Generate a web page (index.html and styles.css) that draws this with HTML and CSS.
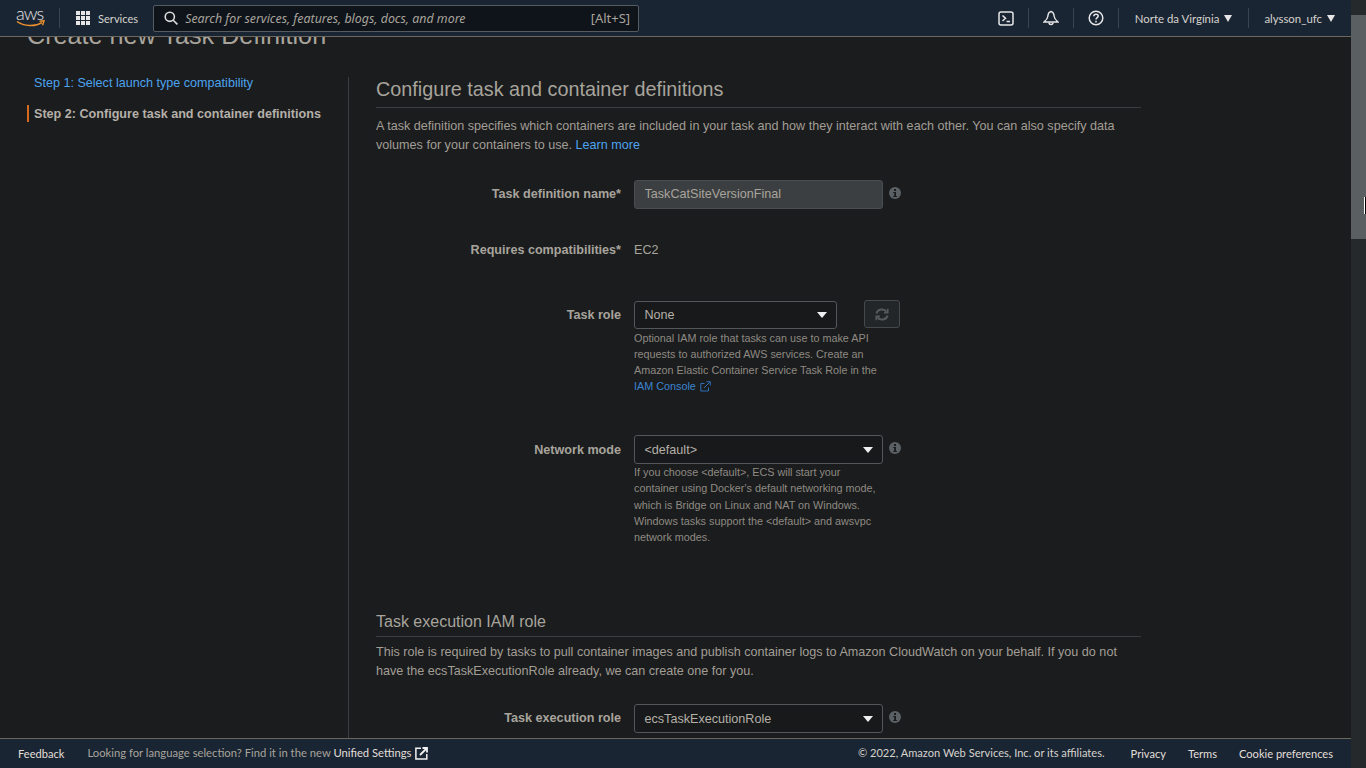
FILE: index.html
```html
<!DOCTYPE html>
<html lang="en">
<head>
    <meta charset="UTF-8">
    <meta name="viewport" content="width=device-width, initial-scale=1.0">
    <title>Create new Task Definition</title>
    <link rel="stylesheet" href="styles.css">
</head>
<body>
<div id="window">
    <div id="app">
        <header id="topbar">
            <a class="logo">
                <span class="logo-text">aws</span>
                <svg class="logo-smile" width="30" height="8" viewBox="0 0 30 8"><path d="M1 1.5C8 6.5 19 7 26 2.6" fill="none" stroke="#ec912d" stroke-width="1.5"/><path d="M23.5 1.2L28 .8 26.6 5.2" fill="none" stroke="#ec912d" stroke-width="1.4"/></svg>
            </a>
            <span class="nav-sep"></span>
            <a class="services">
                <svg width="14" height="14" viewBox="0 0 14 14" fill="#e6e6e6"><rect width="4" height="4"/><rect x="5" width="4" height="4"/><rect x="10" width="4" height="4"/><rect y="5" width="4" height="4"/><rect x="5" y="5" width="4" height="4"/><rect x="10" y="5" width="4" height="4"/><rect y="10" width="4" height="4"/><rect x="5" y="10" width="4" height="4"/><rect x="10" y="10" width="4" height="4"/></svg>
                <span>Services</span>
            </a>
            <div class="search">
                <svg width="14" height="14" viewBox="0 0 14 14" fill="none" stroke="#dcdcdc" stroke-width="1.6"><circle cx="5.8" cy="5.8" r="4.6"/><path d="M9.2 9.2L13.4 13.4"/></svg>
                <span class="search-text">Search for services, features, blogs, docs, and more</span>
                <span class="search-key">[Alt+S]</span>
            </div>
            <div class="top-right">
                <a class="top-icon">
                    <svg width="16" height="15" viewBox="0 0 16 15" fill="none" stroke="#e6e6e6" stroke-width="1.5"><rect x="1" y="1" width="14" height="13" rx="2"/><path d="M4.5 4.5L7.5 7.3 4.5 10"/><path d="M8.5 10.5H12"/></svg>
                </a>
                <span class="nav-sep"></span>
                <a class="top-icon">
                    <svg width="16" height="16" viewBox="0 0 16 16" fill="none" stroke="#e6e6e6" stroke-width="1.4"><path d="M8 1.5C5.8 2 5 4 4.8 6.5 4.6 8.6 3 10.4 1 12H15C13 10.4 11.4 8.6 11.2 6.5 11 4 10.2 2 8 1.5Z"/><path d="M6 12.5C6 15.2 10 15.2 10 12.5"/></svg>
                </a>
                <span class="nav-sep"></span>
                <a class="top-icon">
                    <svg width="16" height="16" viewBox="0 0 16 16" fill="none" stroke="#e6e6e6" stroke-width="1.5"><circle cx="8" cy="8" r="6.8"/><path d="M5.8 6.2C5.9 3.6 10.2 3.6 10.2 6 10.2 7.7 8 7.6 8 9.6"/><path d="M8 10.8V12.4"/></svg>
                </a>
                <span class="nav-sep"></span>
                <a class="top-menu region">Norte da Virgínia<i class="caret"></i></a>
                <span class="nav-sep"></span>
                <a class="top-menu user">alysson_ufc<i class="caret"></i></a>
            </div>
        </header>

        <main id="page">
            <h1>Create new Task Definition</h1>
            <div id="columns">
                <nav id="steps">
                    <a class="step">Step 1: Select launch type compatibility</a>
                    <a class="step current">Step 2: Configure task and container definitions</a>
                </nav>
                <section id="content">
                    <h2>Configure task and container definitions</h2>
                    <p class="intro">A task definition specifies which containers are included in your task and how they interact with each other. You can also specify data volumes for your containers to use. <a class="link">Learn more</a></p>

                    <div class="row row-name">
                        <label>Task definition name*</label>
                        <div class="controls">
                            <input class="text-input" type="text" value="TaskCatSiteVersionFinal">
                            <svg class="info" width="12" height="12" viewBox="0 0 12 12"><circle cx="6" cy="6" r="6" fill="#5b6064"/><rect x="5" y="2" width="2" height="2" fill="#1a1c1e"/><path d="M4.2 5H7V9H8V10H4.2V9H5.2V6H4.2Z" fill="#1a1c1e"/></svg>
                        </div>
                    </div>

                    <div class="row row-compat">
                        <label>Requires compatibilities*</label>
                        <div class="controls"><span class="value">EC2</span></div>
                    </div>

                    <div class="row row-role">
                        <label>Task role</label>
                        <div>
                            <div class="controls">
                                <div class="select select-short"><span>None</span><i class="caret big"></i></div>
                                <button class="refresh">
                                    <svg width="14" height="13" viewBox="0 0 14 13" fill="none" stroke="#55595c" stroke-width="2"><path d="M1.5 5.5C2.4 1 9 0 11.6 3.6"/><path d="M12.5 7.5C11.6 12 5 13 2.4 9.4"/><path d="M12.8 .8V4.6H9" stroke-width="1.6"/><path d="M1.2 12.2V8.4H5" stroke-width="1.6"/></svg>
                                </button>
                            </div>
                            <p class="help">Optional IAM role that tasks can use to make API requests to authorized AWS services. Create an Amazon Elastic Container Service Task Role in the <a class="link-dark">IAM Console</a>
                                <svg class="ext" width="11" height="11" viewBox="0 0 11 11" fill="none" stroke="#2f6fb5" stroke-width="1"><path d="M8.5 6.5V10H.8V2.5H4.5"/><path d="M4 7L10 1"/><path d="M6.5 .7H10.3V4.5"/></svg>
                            </p>
                        </div>
                    </div>

                    <div class="row row-network">
                        <label>Network mode</label>
                        <div>
                            <div class="controls">
                                <div class="select"><span>&lt;default&gt;</span><i class="caret big"></i></div>
                                <svg class="info" width="12" height="12" viewBox="0 0 12 12"><circle cx="6" cy="6" r="6" fill="#5b6064"/><rect x="5" y="2" width="2" height="2" fill="#1a1c1e"/><path d="M4.2 5H7V9H8V10H4.2V9H5.2V6H4.2Z" fill="#1a1c1e"/></svg>
                            </div>
                            <p class="help help-network">If you choose &lt;default&gt;, ECS will start your container using Docker's default networking mode, which is Bridge on Linux and NAT on Windows. Windows tasks support the &lt;default&gt; and awsvpc network modes.</p>
                        </div>
                    </div>

                    <h3>Task execution IAM role</h3>
                    <p class="intro intro-sub">This role is required by tasks to pull container images and publish container logs to Amazon CloudWatch on your behalf. If you do not have the ecsTaskExecutionRole already, we can create one for you.</p>

                    <div class="row row-exec">
                        <label>Task execution role</label>
                        <div class="controls">
                            <div class="select"><span>ecsTaskExecutionRole</span><i class="caret big"></i></div>
                            <svg class="info" width="12" height="12" viewBox="0 0 12 12"><circle cx="6" cy="6" r="6" fill="#5b6064"/><rect x="5" y="2" width="2" height="2" fill="#1a1c1e"/><path d="M4.2 5H7V9H8V10H4.2V9H5.2V6H4.2Z" fill="#1a1c1e"/></svg>
                        </div>
                    </div>
                </section>
            </div>
        </main>

        <footer id="footer">
            <a class="foot-link feedback">Feedback</a>
            <span class="foot-note">Looking for language selection? Find it in the new <a class="foot-link">Unified Settings</a></span>
            <svg class="foot-ext" width="13" height="13" viewBox="0 0 13 13" fill="none" stroke="#f2f2f2" stroke-width="1.5"><path d="M6 1.2H.9V12.1H11.8V7"/><path d="M5 8L11.5 1.5" stroke-width="1.8"/><path d="M7.5 1H12V5.5" stroke-width="1.8"/></svg>
            <span class="foot-copy">© 2022, Amazon Web Services, Inc. or its affiliates.</span>
            <a class="foot-link privacy">Privacy</a>
            <a class="foot-link terms">Terms</a>
            <a class="foot-link cookies">Cookie preferences</a>
        </footer>
    </div>

    <div id="scrollbar">
        <div class="thumb"></div>
        <span class="cursor"></span>
    </div>
</div>
</body>
</html>
```

FILE: styles.css
```css
*{
    box-sizing: border-box;
}
body{
    margin: 0;
    background-color: #1a1c1e;
    color: #b5b0a8;
    font-family: "Liberation Sans", Arial, sans-serif;
    font-size: 12.6px;
}

#window{
    display: flex;
    height: 100vh;
    overflow: hidden;
}
#app{
    flex: 1;
    min-width: 0;
    display: flex;
    flex-direction: column;
}

/* top bar */
#topbar{
    flex: none;
    height: 37px;
    display: flex;
    align-items: center;
    padding-left: 16px;
    background-color: #1a2533;
    border-bottom: 1px solid #6b675f;
    font-family: Lato, sans-serif;
    font-size: 11.4px;
    color: #d6d3cd;
}
.logo{
    width: 30px;
    height: 24px;
    display: block;
    margin-right: 13px;
    position: relative;
}
.logo-text{
    display: block;
    font-size: 18px;
    font-weight: 300;
    line-height: 15px;
    color: #e6e6e6;
    letter-spacing: -1px;
}
.logo-smile{
    position: absolute;
    left: 0;
    top: 14px;
}
.nav-sep{
    width: 1px;
    height: 20px;
    background-color: #3a444f;
    flex: none;
}
.services{
    display: flex;
    align-items: center;
    gap: 8px;
    margin-left: 16px;
    font-size: 11.1px;
}
.search{
    width: 486px;
    height: 27px;
    margin-left: 15px;
    display: flex;
    align-items: center;
    padding: 0 8px 0 10px;
    background-color: #0f131a;
    border: 1px solid #565b60;
    border-radius: 2px;
    color: #a8a49c;
    font-family: "Noto Sans", sans-serif;
    font-size: 12.4px;
}
.search-text{
    margin-left: 7px;
    font-style: italic;
    flex: 1;
}
.search-key{
    font-size: 13px;
}
.top-right{
    margin-left: auto;
    display: flex;
    align-items: center;
}
.top-icon{
    width: 44px;
    display: flex;
    justify-content: center;
}
.top-menu{
    display: flex;
    align-items: center;
    gap: 5px;
}
.region{
    padding: 0 16px;
}
.user{
    padding: 0 16px 0 15px;
}
.caret{
    width: 0;
    height: 0;
    border-left: 4.5px solid transparent;
    border-right: 4.5px solid transparent;
    border-top: 7px solid #e6e6e6;
}

/* page */
#page{
    flex: 1;
    min-height: 0;
    overflow: hidden;
}
h1{
    margin: -17px 0 27px 27px;
    font-size: 25.2px;
    line-height: 30px;
    font-weight: 400;
    color: #a8a49c;
}
#columns{
    display: flex;
    align-items: stretch;
    height: 800px;
}
#steps{
    width: 349px;
    flex: none;
    border-right: 1px solid #3b3e40;
}
.step{
    display: block;
    height: 12px;
    line-height: 12px;
    margin: 0 0 16px 27px;
    padding-left: 7px;
    color: #4da3ee;
}
.step.current{
    height: 17px;
    line-height: 19px;
    color: #b5b0a8;
    font-weight: bold;
    border-left: 2px solid #d5691e;
    padding-left: 5px;
}
#content{
    width: 792px;
    padding-left: 27px;
    flex: none;
}
h2{
    margin: 0;
    height: 31px;
    font-size: 19.8px;
    line-height: 24px;
    font-weight: 400;
    color: #a8a49c;
    border-bottom: 1px solid #3b3e40;
}
.intro{
    margin: 9px 0 0;
    line-height: 19px;
    color: #a39e95;
}
.intro-sub{
    margin-top: 5.5px;
}
.link{
    color: #4da3ee;
}
h3{
    margin: 66px 0 0;
    height: 26px;
    font-size: 16px;
    line-height: 22px;
    font-weight: 400;
    color: #a8a49c;
    border-bottom: 1px solid #3b3e40;
}

/* form rows */
.row{
    display: grid;
    grid-template-columns: 245px 1fr;
    column-gap: 13px;
}
.row label{
    height: 29px;
    text-align: right;
    font-weight: bold;
    line-height: 29px;
    color: #a8a49c;
}
.controls{
    display: flex;
    align-items: center;
    min-height: 29px;
}
.row-name{
    margin-top: 25px;
}
.row-compat{
    margin-top: 26px;
}
.row-compat label,
.row-network label{
    padding-top: 1px;
}
.row-role{
    margin-top: 37px;
}
.row-role .controls{
    align-items: flex-start;
}
.row-network{
    margin-top: 41px;
}
.row-exec{
    margin-top: 23.5px;
}
.text-input{
    width: 249px;
    height: 29px;
    padding: 0 9.5px 2px;
    background-color: #3c3f41;
    border: 1px solid #4a4d4f;
    border-radius: 3px;
    color: #a8a49c;
    font-family: inherit;
    font-size: inherit;
}
.value{
    color: #a8a49c;
}
.select{
    width: 249px;
    height: 29px;
    display: flex;
    align-items: center;
    justify-content: space-between;
    padding: 0 9px 0 9.5px;
    background-color: #17191b;
    border: 1px solid #53575a;
    border-radius: 3px;
    color: #b5b0a8;
}
.select-short{
    width: 203px;
    height: 28px;
}
.caret.big{
    border-left-width: 5px;
    border-right-width: 5px;
    border-top-width: 6px;
    border-top-color: #f0f0f0;
}
.info{
    margin: 0 0 3px 6px;
}
.refresh{
    width: 36px;
    height: 28px;
    margin: -1px 0 0 27px;
    display: flex;
    align-items: center;
    justify-content: center;
    background-color: #232628;
    border: 1px solid #46494c;
    border-radius: 3px;
    padding: 0;
}
.help{
    width: 249px;
    margin: 0;
    font-size: 10.8px;
    line-height: 16px;
    color: #8f8a82;
}
.help-network{
    line-height: 16.25px;
}
.link-dark{
    color: #3d84d1;
}
.ext{
    vertical-align: -2px;
    margin-left: 1px;
}

/* footer */
#footer{
    flex: none;
    height: 30px;
    display: flex;
    align-items: center;
    background-color: #1a2533;
    border-top: 1px solid #6b675f;
    font-family: Lato, sans-serif;
    font-size: 11.1px;
    color: #a8a49c;
}
.foot-link{
    color: #e2dfd9;
}
.feedback{
    margin-left: 18px;
}
.foot-note{
    margin-left: 23px;
    margin-bottom: 2px;
    font-size: 11.25px;
}
.foot-ext{
    margin-left: 3px;
    margin-bottom: 1px;
}
.foot-copy{
    margin-left: auto;
    margin-bottom: 2px;
    color: #d6d3cd;
}
.privacy{
    margin-left: 26px;
}
.terms{
    margin-left: 22px;
}
.cookies{
    margin: 0 18px 0 22px;
}

/* browser scrollbar */
#scrollbar{
    width: 15px;
    flex: none;
    position: relative;
    padding-top: 15px;
    background-color: #26292b;
}
.thumb{
    height: 224px;
    background-color: #5a6062;
}
.cursor{
    position: absolute;
    left: 13px;
    top: 197px;
    width: 2px;
    height: 17px;
    background-color: #fff;
    border-right: 1px solid #000;
}
```
